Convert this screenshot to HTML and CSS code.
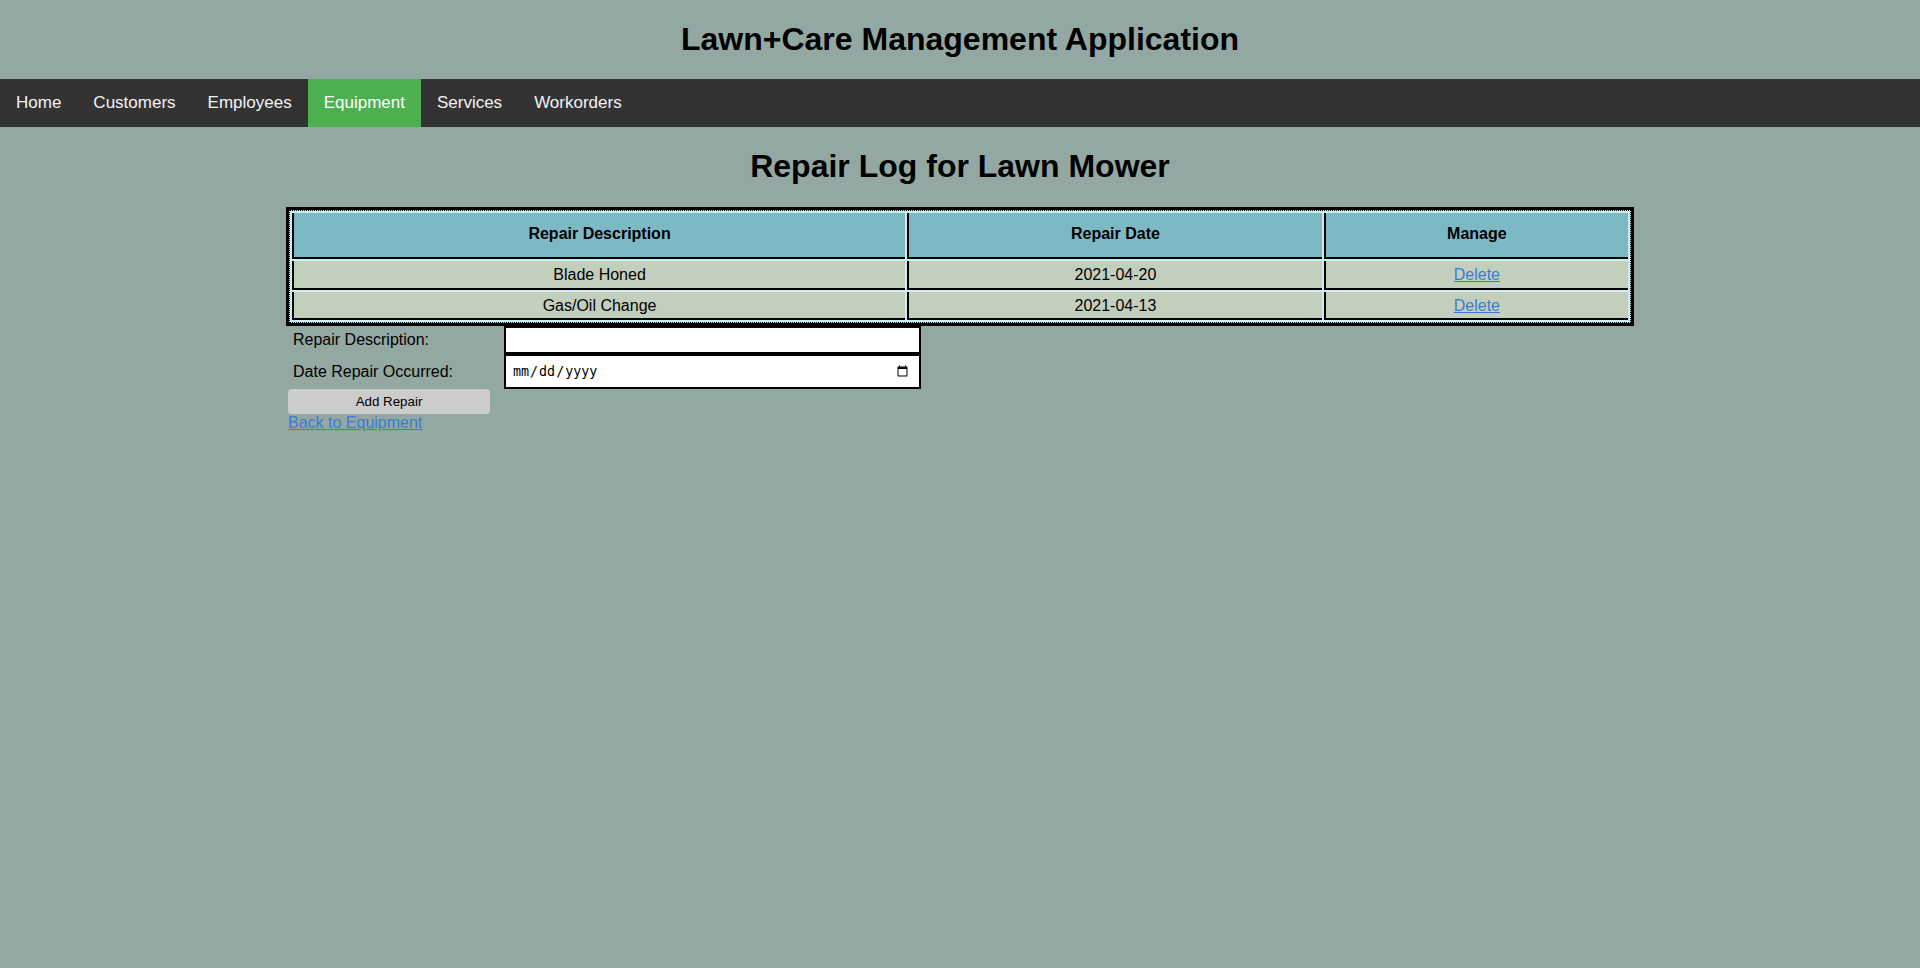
FILE: index.html
```html
<!DOCTYPE html>
<html lang="en">
<head>
<meta charset="utf-8">
<title>Repair Log for Lawn Mower</title>
<link rel="stylesheet" href="styles.css">
</head>
<body>
  <h1 class="app-title">Lawn+Care Management Application</h1>
  <nav class="topnav">
    <a href="#">Home</a>
    <a href="#">Customers</a>
    <a href="#">Employees</a>
    <a href="#" class="active">Equipment</a>
    <a href="#">Services</a>
    <a href="#">Workorders</a>
  </nav>
  <h1 class="page-title">Repair Log for Lawn Mower</h1>
  <main class="content">
    <div class="table-frame">
      <table class="repair-table">
        <thead>
          <tr>
            <th class="col-desc">Repair Description</th>
            <th class="col-date">Repair Date</th>
            <th class="col-manage">Manage</th>
          </tr>
        </thead>
        <tbody>
          <tr>
            <td>Blade Honed</td>
            <td>2021-04-20</td>
            <td><a href="#" class="link">Delete</a></td>
          </tr>
          <tr>
            <td>Gas/Oil Change</td>
            <td>2021-04-13</td>
            <td><a href="#" class="link">Delete</a></td>
          </tr>
        </tbody>
      </table>
    </div>
    <form class="repair-form">
      <label class="field-label" for="desc">Repair Description:</label>
      <input class="field-input text-input" type="text" id="desc">
      <label class="field-label" for="rdate">Date Repair Occurred:</label>
      <input class="field-input date-input" type="date" id="rdate">
      <button class="add-btn" type="button">Add Repair</button>
    </form>
    <a href="#" class="link back-link">Back to Equipment</a>
  </main>
</body>
</html>
```
FILE: styles.css
```css
html, body {
  margin: 0;
  padding: 0;
}

body {
  background: #93a8a2;
  font-family: "Liberation Sans", Arial, sans-serif;
  font-size: 16px;
  color: #000;
}

.app-title {
  margin: 21px 0 21px;
  font-size: 32px;
  font-weight: bold;
  text-align: center;
}

.topnav {
  display: flex;
  background: #333;
}

.topnav a {
  padding: 14px 16px;
  color: #f2f2f2;
  font-size: 17px;
  text-decoration: none;
}

.topnav a.active {
  background: #4caf50;
  color: #fff;
}

.page-title {
  margin: 21px 0 22px;
  font-size: 32px;
  font-weight: bold;
  text-align: center;
}

.content {
  width: 70%;
  margin: 0 auto;
}

.table-frame {
  border: 3px solid #000;
  margin: 0 -2px;
}

.repair-table {
  width: 100%;
  table-layout: fixed;
  border: 1px dotted #000;
  border-spacing: 2px;
  background: #c8eef3;
}

.repair-table th,
.repair-table td {
  border-left: 2px solid #000;
  border-bottom: 2px solid #000;
  text-align: center;
}

.repair-table th {
  background: #7db8c5;
  padding: 12px 2px 14px;
  font-weight: bold;
}

.repair-table td {
  background: #c3cfbd;
  padding: 5px 2px 3.5px;
}

.col-desc { width: 46.2%; }
.col-date { width: 31.1%; }
.col-manage { width: 22.7%; }

.link {
  color: #3a7bd5;
}

.repair-form {
  display: grid;
  grid-template-columns: 216px 417px;
  align-items: center;
}

.field-label {
  padding-left: 5px;
}

.field-input {
  box-sizing: border-box;
  width: 100%;
  margin: 0;
  border: 2px solid #000;
  background: #fff;
}

.text-input {
  height: 28px;
}

.date-input {
  height: 35px;
  padding: 0 8px 0 6px;
  font-size: 13.33px;
}

.add-btn {
  grid-column: 1;
  width: 202px;
  height: 25px;
  border: none;
  border-radius: 4px;
  background: #ccc;
  color: #000;
  font-family: "Liberation Sans", Arial, sans-serif;
  font-size: 13.33px;
  padding: 0;
}

.back-link {
  display: inline-block;
}
```
